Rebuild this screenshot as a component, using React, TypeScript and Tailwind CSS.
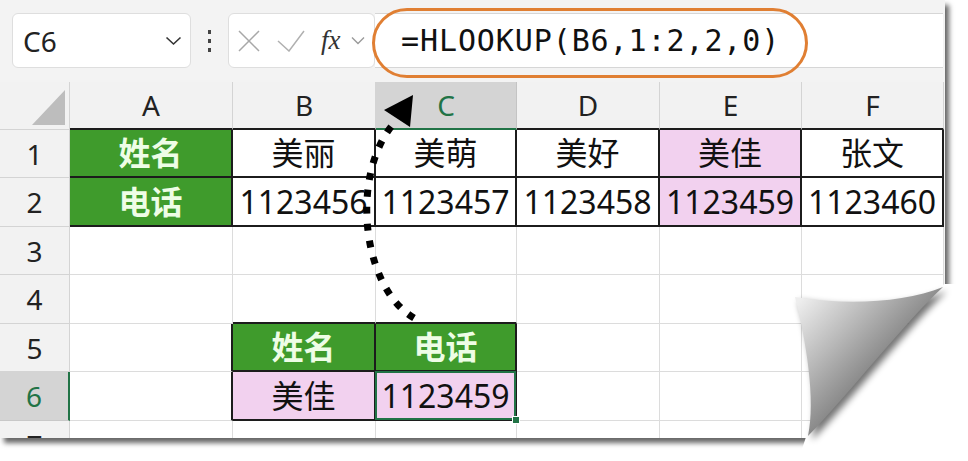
import React from 'react';

const font = "font-['Noto_Sans','Noto_Sans_CJK_SC',sans-serif]";

const base = 'flex items-center justify-center overflow-hidden whitespace-nowrap text-[32px] leading-none text-[#111]';
const grid = 'bg-white border-r border-b border-[#dcdcdc]';
const dark = 'border-r-2 border-b-2 border-[#1c1c1c]';
const green = 'bg-[#3f9b2c] !text-[#eefde6] font-bold';
const pink = 'bg-[#f2d1ef]';

type Cell = { t?: string; c: string; sel?: boolean };

const headers = ['A', 'B', 'C', 'D', 'E', 'F'];

const rows: Cell[][] = [
  [
    { t: '姓名', c: `${dark} ${green}` },
    { t: '美丽', c: `${dark} bg-white` },
    { t: '美萌', c: `${dark} bg-white` },
    { t: '美好', c: `${dark} bg-white` },
    { t: '美佳', c: `${dark} ${pink}` },
    { t: '张文', c: `${dark} bg-white` },
  ],
  [
    { t: '电话', c: `${dark} ${green}` },
    { t: '1123456', c: `${dark} bg-white` },
    { t: '1123457', c: `${dark} bg-white` },
    { t: '1123458', c: `${dark} bg-white` },
    { t: '1123459', c: `${dark} ${pink}` },
    { t: '1123460', c: `${dark} bg-white` },
  ],
  [{ c: grid }, { c: grid }, { c: grid }, { c: grid }, { c: grid }, { c: grid }],
  [
    { c: grid },
    { c: 'bg-white border-r border-b-2 border-r-[#dcdcdc] border-b-[#1c1c1c]' },
    { c: 'bg-white border-r border-b-2 border-r-[#dcdcdc] border-b-[#1c1c1c]' },
    { c: grid },
    { c: grid },
    { c: grid },
  ],
  [
    { c: 'bg-white border-b border-r-2 border-b-[#dcdcdc] border-r-[#1c1c1c]' },
    { t: '姓名', c: `${dark} ${green}` },
    { t: '电话', c: `${dark} ${green}` },
    { c: grid },
    { c: grid },
    { c: grid },
  ],
  [
    { c: 'bg-white border-b border-r-2 border-b-[#dcdcdc] border-r-[#1c1c1c]' },
    { t: '美佳', c: `${dark} ${pink}` },
    { t: '1123459', c: `${dark} ${pink}`, sel: true },
    { c: grid },
    { c: grid },
    { c: grid },
  ],
  [{ c: grid }, { c: grid }, { c: grid }, { c: grid }, { c: grid }, { c: grid }],
];

function Toolbar() {
  return (
    <div className="h-[82px] flex items-start pt-[13px] pl-[12px] bg-[#f3f3f3]">
      <div className="w-[179px] h-[55px] bg-white border border-[#dedede] rounded-[6px] flex items-center justify-between pl-[10px] pr-[8px]">
        <span className="text-[28px] leading-none text-[#222]">C6</span>
        <svg width="17" height="10" viewBox="0 0 17 10">
          <path d="M1.5 1.5 L8.5 8 L15.5 1.5" fill="none" stroke="#333" strokeWidth="1.6" />
        </svg>
      </div>
      <div className="w-[37px] h-[55px] flex flex-col items-center justify-center gap-[5px]">
        <span className="w-[3px] h-[4px] bg-[#444]" />
        <span className="w-[3px] h-[4px] bg-[#444]" />
        <span className="w-[3px] h-[4px] bg-[#444]" />
      </div>
      <div className="w-[147px] h-[55px] bg-white border border-[#dedede] rounded-[6px] flex items-center pl-[9px]">
        <svg width="22" height="22" viewBox="0 0 22 22">
          <path d="M1 1 L21 21 M21 1 L1 21" stroke="#a8a8a8" strokeWidth="1.5" />
        </svg>
        <svg width="28" height="22" viewBox="0 0 28 22" className="ml-[17px]">
          <path d="M1 11 L12 21 L27 1" fill="none" stroke="#b0b0b0" strokeWidth="1.5" />
        </svg>
        <span className="ml-[16px] font-['Liberation_Serif',serif] italic text-[27px] leading-none text-[#333]">
          fx
        </span>
        <svg width="14" height="9" viewBox="0 0 14 9" className="ml-[10px]">
          <path d="M1 1.5 L7 7.5 L13 1.5" fill="none" stroke="#9a9a9a" strokeWidth="1.4" />
        </svg>
      </div>
      <div className="relative flex-1 mr-[2px] h-[55px] bg-white border-y border-[#d6d6d6] flex items-center pl-[26px]">
        <span className="font-['DejaVu_Sans_Mono',monospace] text-[30px] leading-none text-[#111] tracking-[0.9px]">
          =HLOOKUP(B6,1:2,2,0)
        </span>
        <div className="absolute -left-[3px] -top-[6px] w-[436px] h-[70px] rounded-[35px] border-[3px] border-[#e07f33]" />
      </div>
    </div>
  );
}

function Sheet() {
  return (
    <div className="grid grid-cols-[70px_163px_143px_141px_143px_142px_142px] grid-rows-[48px_48px_49px_48px_49px_48px_49px_48px]">
      <div className="bg-[#f2f2f2] border-r border-b border-[#d4d4d4] flex items-end justify-end pr-[4px] pb-[4px]">
        <svg width="33" height="35" viewBox="0 0 33 35">
          <polygon points="33,0 33,35 0,35" fill="#bdbdbd" />
        </svg>
      </div>
      {headers.map((h) => (
        <div
          key={h}
          className={
            h === 'C'
              ? 'flex items-center justify-center text-[28px] leading-none bg-[#d4d4d4] border-r border-r-[#c4c4c4] border-b-2 border-b-[#217346] text-[#217346]'
              : 'flex items-center justify-center text-[28px] leading-none bg-[#f2f2f2] border-r border-r-[#d4d4d4] border-b-2 border-b-[#1c1c1c] text-[#222]'
          }
        >
          {h}
        </div>
      ))}
      {rows.map((row, i) => (
        <React.Fragment key={i}>
          <div
            className={
              i === 5
                ? 'flex items-center justify-center text-[28px] leading-none bg-[#d4d4d4] border-r-2 border-r-[#217346] border-b border-b-[#c8c8c8] text-[#217346]'
                : 'flex items-center justify-center text-[28px] leading-none bg-[#f2f2f2] border-r border-b border-[#d4d4d4] text-[#222]'
            }
          >
            {i + 1}
          </div>
          {row.map((cell, j) => (
            <div key={j} className={`${base} ${cell.c} ${cell.sel ? 'relative !overflow-visible' : ''}`}>
              {cell.t}
              {cell.sel && (
                <>
                  <div className="absolute -left-[1px] -top-[1px] -right-[1px] -bottom-[1px] border-2 border-[#217346]" />
                  <div className="absolute -right-[5px] -bottom-[5px] w-[8px] h-[8px] bg-[#217346] border border-white" />
                </>
              )}
            </div>
          ))}
        </React.Fragment>
      ))}
    </div>
  );
}

export default function App() {
  return (
    <div className={`relative w-[968px] h-[461px] bg-white overflow-hidden ${font}`}>
      <div className="w-[945px] h-[438px] bg-[#f3f3f3] overflow-hidden shadow-[4px_5px_5px_rgba(0,0,0,0.6)]">
        <Toolbar />
        <Sheet />
      </div>

      <svg className="absolute inset-0 pointer-events-none" width="968" height="461" viewBox="0 0 968 461">
        <defs>
          <linearGradient id="curl" gradientUnits="userSpaceOnUse" x1="800" y1="300" x2="872" y2="368">
            <stop offset="0" stopColor="#eeeeee" />
            <stop offset="0.55" stopColor="#b8b8b8" />
            <stop offset="1" stopColor="#8a8a8a" />
          </linearGradient>
          <filter id="blur" x="-20%" y="-20%" width="140%" height="140%">
            <feGaussianBlur stdDeviation="3.5" />
          </filter>
        </defs>

        {/* dotted arrow */}
        <path
          d="M414 318 C360 286 350 170 396 121"
          fill="none"
          stroke="#000"
          strokeWidth="7"
          strokeDasharray="7 10"
        />
        <polygon points="413,95 384,110 410,127" fill="#000" />

        {/* page curl */}
        <polygon points="944,284 968,284 968,461 798,461 806,437" fill="#fff" />
        <path
          d="M795 297 C850 306 905 302 943 287 C905 322 850 393 808 436 C816 400 806 340 795 297 Z"
          fill="#000"
          opacity="0.55"
          filter="url(#blur)"
          transform="translate(4 4)"
        />
        <path
          d="M795 297 C850 306 905 302 943 287 C905 322 850 393 808 436 C816 400 806 340 795 297 Z"
          fill="url(#curl)"
        />
      </svg>
    </div>
  );
}
